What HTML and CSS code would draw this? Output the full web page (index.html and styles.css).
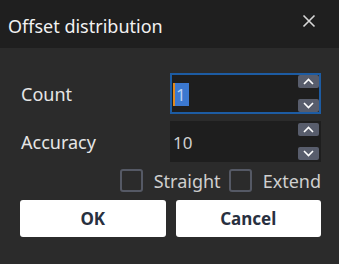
FILE: index.html
```html
<!DOCTYPE html>
<html lang="en">
<head>
  <meta charset="UTF-8">
  <title>Offset distribution</title>
  <link rel="stylesheet" href="styles.css">
</head>
<body>
  <div class="dialog">
    <div class="titlebar">
      <span class="title">Offset distribution</span>
      <svg class="close" width="14" height="14" viewBox="0 0 14 14">
        <path d="M1.5 1.5 L12.5 12.5 M12.5 1.5 L1.5 12.5" stroke="#d8d8d8" stroke-width="1.6" fill="none"/>
      </svg>
    </div>

    <div class="content">
      <div class="fields">
        <label class="label">Count</label>
        <div class="spin focused">
          <div class="value"><span class="caret"></span><span class="sel">1</span></div>
          <div class="arrows">
            <span class="arrow"><svg width="11" height="7" viewBox="0 0 11 7"><path d="M1 6 L5.5 1.5 L10 6" stroke="#fff" stroke-width="1.6" fill="none"/></svg></span>
            <span class="arrow"><svg width="11" height="7" viewBox="0 0 11 7"><path d="M1 1 L5.5 5.5 L10 1" stroke="#fff" stroke-width="1.6" fill="none"/></svg></span>
          </div>
        </div>

        <label class="label">Accuracy</label>
        <div class="spin">
          <div class="value">10</div>
          <div class="arrows">
            <span class="arrow"><svg width="11" height="7" viewBox="0 0 11 7"><path d="M1 6 L5.5 1.5 L10 6" stroke="#fff" stroke-width="1.6" fill="none"/></svg></span>
            <span class="arrow"><svg width="11" height="7" viewBox="0 0 11 7"><path d="M1 1 L5.5 5.5 L10 1" stroke="#fff" stroke-width="1.6" fill="none"/></svg></span>
          </div>
        </div>
      </div>

      <div class="checks">
        <label class="check"><span class="box"></span>Straight</label>
        <label class="check"><span class="box"></span>Extend</label>
      </div>

      <div class="buttons">
        <button class="btn">OK</button>
        <button class="btn">Cancel</button>
      </div>
    </div>
  </div>
</body>
</html>
```

FILE: styles.css
```css
:root {
  --bg: #2b2b2b;
  --title: #1f1f1f;
  --field: #1e1e1e;
  --text: #e6e6e6;
  --accent: #1d5ca3;
  --spin: #585d6c;
}

* {
  box-sizing: border-box;
}

body {
  margin: 0;
  font-family: "Noto Sans", "Open Sans", sans-serif;
  background: var(--bg);
  color: var(--text);
}

.dialog {
  width: 339px;
  height: 264px;
  background: var(--bg);
}

.titlebar {
  height: 48px;
  background: var(--title);
  display: flex;
  align-items: center;
  justify-content: space-between;
  padding: 3px 23px 0 8px;
}

.title {
  font-size: 18px;
  color: #f2f2f2;
}

.close {
  margin-top: -10px;
}

.content {
  padding: 25px 18px 0 20px;
}

.fields {
  display: grid;
  grid-template-columns: 150px 151px;
  row-gap: 7px;
  align-items: center;
}

.label {
  font-size: 18px;
  padding-left: 1px;
}

.spin {
  height: 41px;
  background: var(--field);
  border: 2px solid var(--field);
  display: flex;
  justify-content: space-between;
  padding: 0 0 0 1px;
}

.spin.focused {
  border-color: var(--accent);
}

.value {
  display: flex;
  align-items: center;
  font-size: 17px;
  color: #d0d0d0;
  padding-top: 1px;
}

.caret {
  width: 2px;
  height: 23px;
  background: #e08a1e;
}

.sel {
  background: #3b78d0;
  color: #b9d3f5;
  height: 23px;
  line-height: 23px;
  padding: 0 3px 0 1px;
  font-size: 17px;
}

.arrows {
  display: flex;
  flex-direction: column;
  justify-content: space-between;
}

.arrow {
  width: 21px;
  height: 13px;
  background: var(--spin);
  border-radius: 2px;
  display: flex;
  align-items: center;
  justify-content: center;
}

.checks {
  display: flex;
  justify-content: flex-end;
  gap: 8px;
  margin-top: 7px;
  height: 23px;
}

.check {
  display: flex;
  align-items: center;
  gap: 11px;
  font-size: 18px;
  color: #cfcfcf;
}

.box {
  width: 23px;
  height: 23px;
  border: 2px solid #555965;
  border-radius: 3px;
}

.buttons {
  display: flex;
  gap: 10px;
  margin-top: 8px;
}

.btn {
  flex: 1;
  height: 37px;
  background: #fff;
  border: none;
  border-radius: 3px;
  font-family: inherit;
  font-size: 17px;
  font-weight: bold;
  color: #28303f;
  padding: 0;
}
```
